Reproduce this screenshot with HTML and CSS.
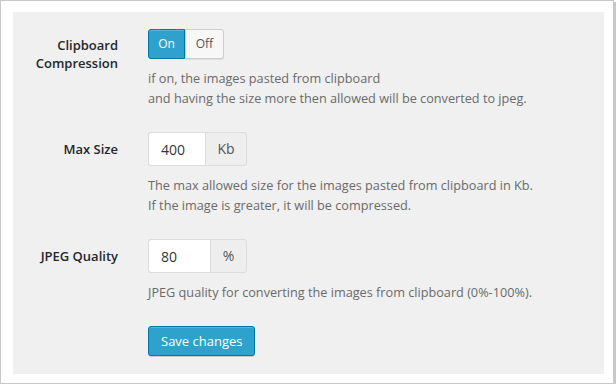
FILE: index.html
```html
<!DOCTYPE html>
<html lang="en">
<head>
  <meta charset="UTF-8">
  <title>Clipboard settings</title>
  <link rel="stylesheet" href="styles.css">
</head>
<body>
  <div class="frame">
    <form class="panel">
      <!-- Clipboard compression -->
      <div class="row">
        <label class="label label-toggle">Clipboard Compression</label>
        <div class="field">
          <div class="toggle">
            <span class="toggle-btn active">On</span>
            <span class="toggle-btn">Off</span>
          </div>
          <p class="desc">if on, the images pasted from clipboard<br>and having the size more then allowed will be converted to jpeg.</p>
        </div>
      </div>

      <!-- Max size -->
      <div class="row">
        <label class="label">Max Size</label>
        <div class="field">
          <div class="input-group">
            <input class="input input-size" type="text" value="400">
            <span class="addon addon-kb">Kb</span>
          </div>
          <p class="desc">The max allowed size for the images pasted from clipboard in Kb.<br>If the image is greater, it will be compressed.</p>
        </div>
      </div>

      <!-- JPEG quality -->
      <div class="row">
        <label class="label">JPEG Quality</label>
        <div class="field">
          <div class="input-group">
            <input class="input input-quality" type="text" value="80">
            <span class="addon addon-pct">%</span>
          </div>
          <p class="desc">JPEG quality for converting the images from clipboard (0%-100%).</p>
        </div>
      </div>

      <div class="row row-last">
        <div></div>
        <div class="field">
          <button class="save-btn" type="button">Save changes</button>
        </div>
      </div>
    </form>
  </div>
</body>
</html>
```

FILE: styles.css
```css
body {
  margin: 0;
  padding: 0;
  font-family: "Open Sans", Arial, sans-serif;
  font-size: 13px;
  color: #333;
  background-color: #fff;
}
.frame {
  box-sizing: border-box;
  width: 614px;
  height: 384px;
  border: 1px solid #c8c8c8;
  box-shadow: 2px 2px 0 #c8c8c8;
  padding: 11px 9px 9px 12px;
  background-color: #fff;
}
/* Panel */
.panel {
  background-color: #f0f0f0;
  height: 100%;
  box-sizing: border-box;
  padding-top: 17px;
}
.row {
  display: grid;
  grid-template-columns: 105px 1fr;
  column-gap: 30px;
  margin-bottom: 24px;
}
.row-last {
  margin-bottom: 0;
}
.label {
  text-align: right;
  font-weight: 600;
  color: #23282d;
  line-height: 18px;
  padding-top: 8px;
}
.label-toggle {
  padding-top: 7px;
}
.desc {
  margin: 9px 0 0 0;
  font-size: 12.7px;
  line-height: 20px;
  color: #6a6a6a;
}
/* Toggle */
.toggle {
  display: flex;
  height: 30px;
}
.toggle-btn {
  box-sizing: border-box;
  height: 30px;
  line-height: 28px;
  font-size: 12px;
  text-align: center;
  border: 1px solid #ccc;
  background-color: #f7f7f7;
  color: #555;
  width: 39px;
  border-radius: 0 3px 3px 0;
  box-shadow: 0 1px 0 #ddd;
}
.toggle-btn.active {
  width: 37px;
  background-color: #2ea2cc;
  border-color: #0074a2;
  color: #fff;
  border-radius: 3px 0 0 3px;
  box-shadow: inset 0 1px 0 rgba(120, 200, 230, 0.5);
}
/* Inputs */
.input-group {
  display: flex;
  height: 34px;
}
.input {
  box-sizing: border-box;
  height: 34px;
  margin: 0;
  padding: 0 12px;
  border: 1px solid #ddd;
  border-right: none;
  border-radius: 3px 0 0 3px;
  background-color: #fff;
  font-family: inherit;
  font-size: 14px;
  color: #32373c;
  outline: none;
}
.input-size {
  width: 57px;
}
.input-quality {
  width: 62px;
}
.addon {
  box-sizing: border-box;
  height: 34px;
  line-height: 32px;
  border: 1px solid #ddd;
  border-radius: 0 3px 3px 0;
  background-color: #eee;
  text-align: center;
  font-size: 14px;
  color: #555;
}
.addon-kb {
  width: 42px;
}
.addon-pct {
  width: 37px;
}
/* Save */
.save-btn {
  box-sizing: border-box;
  height: 30px;
  padding: 0 12px;
  background-color: #2ea2cc;
  border: 1px solid #0074a2;
  border-radius: 3px;
  color: #fff;
  font-family: inherit;
  font-size: 13px;
  box-shadow: inset 0 1px 0 rgba(120, 200, 230, 0.5), 0 1px 0 rgba(0, 0, 0, 0.15);
  cursor: pointer;
}
```
